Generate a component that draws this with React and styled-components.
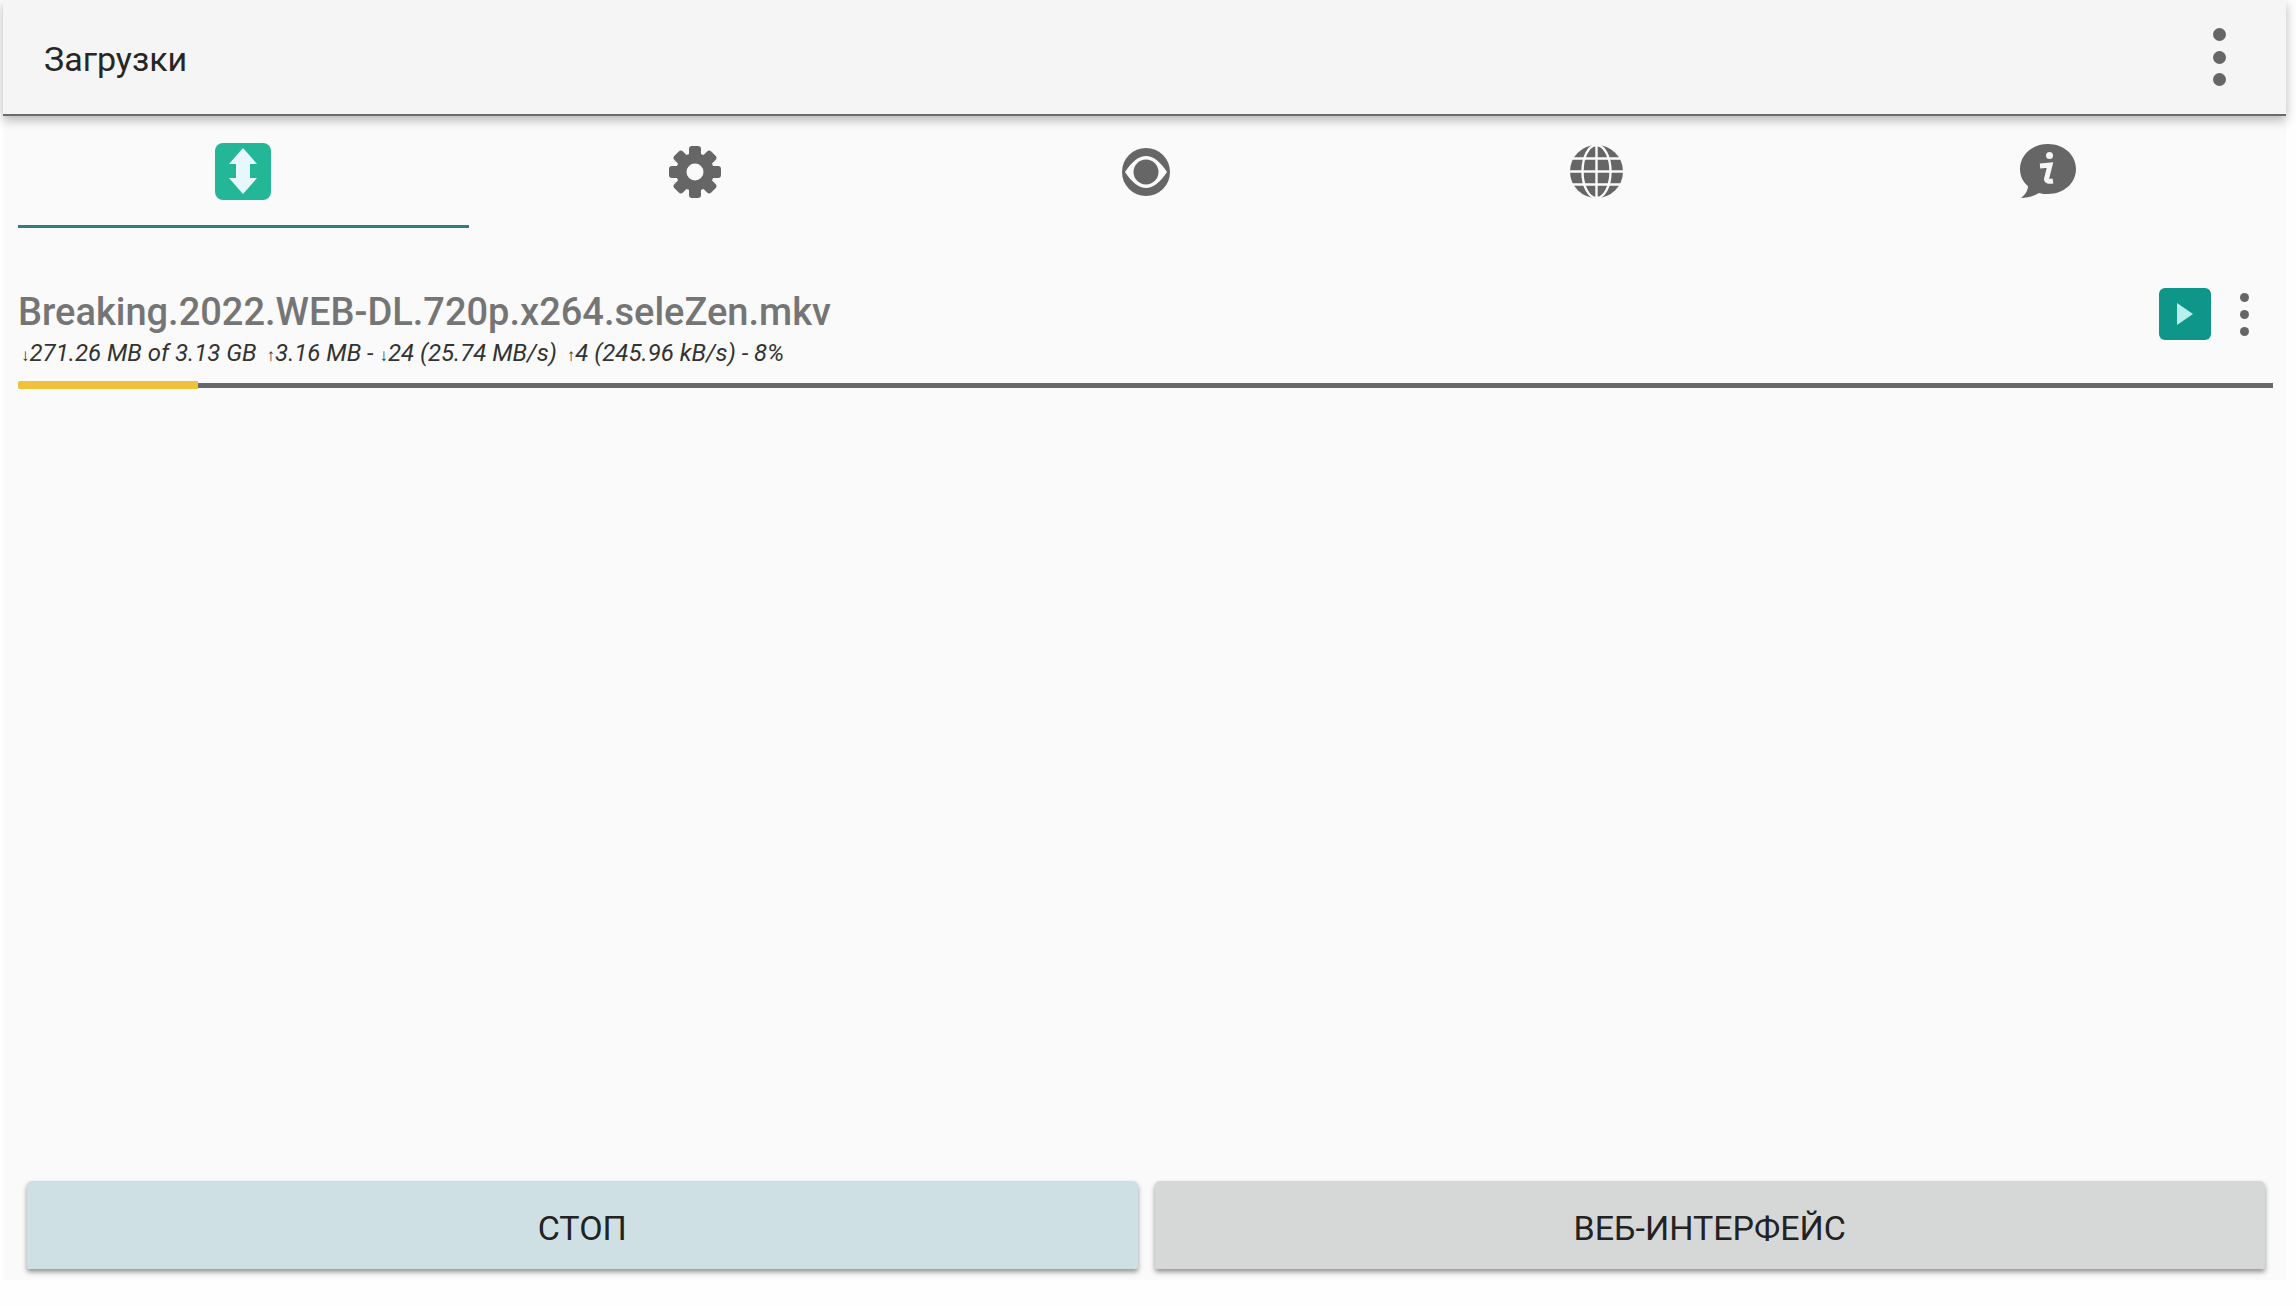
import React from 'react';
import styled, { createGlobalStyle } from 'styled-components';

const GlobalStyle = createGlobalStyle`
  html, body {
    margin: 0;
    padding: 0;
    background: #fefefe;
    font-family: Roboto, "Liberation Sans", sans-serif;
  }
`;

const Shell = styled.div`
  width: 2296px;
  height: 1306px;
  padding-left: 3px;
  box-sizing: border-box;
  overflow: hidden;
`;

const Frame = styled.div`
  width: 2283px;
  height: 1280px;
  display: flex;
  flex-direction: column;
  background: #fafafa;
`;

const Toolbar = styled.header`
  position: relative;
  z-index: 1;
  height: 116px;
  box-sizing: border-box;
  display: flex;
  align-items: center;
  justify-content: space-between;
  padding: 0 60px 0 41px;
  background: #f5f5f5;
  border-bottom: 2px solid #6b6b6b;
  box-shadow: 0 4px 10px rgba(0, 0, 0, 0.28);
`;

const Title = styled.h1`
  margin: 3px 0 0;
  font-size: 34px;
  font-weight: 400;
  color: #262626;
`;

const Kebab = styled.div`
  display: flex;
  flex-direction: column;
  gap: ${(p) => p.$gap}px;
`;

const Dot = styled.span`
  display: block;
  width: ${(p) => p.$size}px;
  height: ${(p) => p.$size}px;
  border-radius: 50%;
  background: #666;
`;

const Tabs = styled.nav`
  display: grid;
  grid-template-columns: repeat(5, 451px);
  padding-left: 15px;
`;

const Tab = styled.div`
  height: 112px;
  box-sizing: border-box;
  padding-top: 2px;
  padding-right: ${(p) => (p.$active ? '2px' : '0')};
  display: flex;
  align-items: center;
  justify-content: center;
  border-bottom: 3px solid ${(p) => (p.$active ? '#2f7d80' : 'transparent')};
`;

const Item = styled.section`
  padding: 60px 13px 0 15px;
`;

const ItemRow = styled.div`
  display: flex;
  justify-content: space-between;
  align-items: flex-start;
`;

const ItemText = styled.div`
  display: flex;
  flex-direction: column;
`;

const FileName = styled.div`
  font-size: 38px;
  line-height: 48px;
  font-weight: 500;
  color: #757575;
`;

const Stats = styled.div`
  display: flex;
  gap: 10px;
  margin-top: 2px;
  font-size: 24px;
  line-height: 30px;
  font-style: italic;
  color: #333;
  padding-left: 3px;
`;

const Arrow = styled.span`
  font-size: 17px;
`;

const Actions = styled.div`
  display: flex;
  align-items: center;
  gap: 29px;
  padding-right: 24px;
`;

const PlayButton = styled.button`
  width: 52px;
  height: 52px;
  padding: 0;
  border: none;
  border-radius: 6px;
  display: flex;
  align-items: center;
  justify-content: center;
  background: #0e9688;
`;

const Progress = styled.div`
  height: 8px;
  margin-top: 11px;
  display: flex;
  align-items: center;
`;

const ProgressFill = styled.div`
  height: 8px;
  border-radius: 2px 0 0 2px;
  background: #efc23d;
`;

const ProgressRest = styled.div`
  flex: 1;
  height: 5px;
  background: #686868;
`;

const Footer = styled.footer`
  margin-top: auto;
  display: grid;
  grid-template-columns: 1fr 1fr;
  gap: 17px;
  padding: 0 21px 11px 24px;
`;

const ActionButton = styled.button`
  height: 88px;
  padding: 6px 0 0;
  border: none;
  border-radius: 5px 5px 2px 2px;
  font-family: inherit;
  font-size: 34px;
  color: #222;
  background: ${(p) => p.$bg};
  box-shadow: 0 3px 5px rgba(0, 0, 0, 0.42);
`;

const TransferIcon = () => (
  <svg width="56" height="57" viewBox="0 0 56 57">
    <rect width="56" height="57" rx="8" fill="#24b797" />
    <path d="M28 5 L42 21 H35 V35 H42 L28 51 L14 35 H21 V21 H14 Z" fill="#e6f8fb" />
  </svg>
);

const GearIcon = () => (
  <svg width="52" height="52" viewBox="0 0 52 52">
    {[0, 45, 90, 135, 180, 225, 270, 315].map((a) => (
      <rect key={a} x="20" y="0" width="12" height="14" rx="3" fill="#666" transform={`rotate(${a} 26 26)`} />
    ))}
    <circle cx="26" cy="26" r="19" fill="#666" />
    <circle cx="26" cy="26" r="8.5" fill="#fafafa" />
  </svg>
);

const EyeIcon = () => (
  <svg width="48" height="48" viewBox="0 0 48 48">
    <circle cx="24" cy="24" r="24" fill="#666" />
    <path d="M3 24 Q24 -8 45 24 Q24 56 3 24 Z" fill="#fafafa" />
    <circle cx="24" cy="24" r="12.5" fill="#666" />
  </svg>
);

const GlobeIcon = () => (
  <svg width="53" height="53" viewBox="0 0 53 53">
    <circle cx="26.5" cy="26.5" r="26.5" fill="#666" />
    <g fill="none" stroke="#fafafa" strokeWidth="2.4">
      <ellipse cx="26.5" cy="26.5" rx="14" ry="26.5" />
      <path d="M26.5 0 V53 M0 26.5 H53 M3 13.5 H50 M3 39.5 H50" />
    </g>
  </svg>
);

const InfoIcon = () => (
  <svg width="56" height="55" viewBox="0 0 56 55">
    <path d="M28 0 C44 0 56 11 56 25 C56 39 44 50 28 50 C25 50 22 50 19 49 C14 52 8 54 1 54 C6 50 8 46 8 42 C3 38 0 32 0 25 C0 11 12 0 28 0 Z" fill="#666" />
    <circle cx="29.5" cy="11.5" r="3.5" fill="#f5f5f5" />
    <path d="M20 22 L30 21 L26.5 35 Q26.5 38 33 37" fill="none" stroke="#f5f5f5" strokeWidth="5" />
  </svg>
);

const PlayIcon = () => (
  <svg width="16" height="22" viewBox="0 0 16 22">
    <path d="M0 0 L16 11 L0 22 Z" fill="#b8f0ec" />
  </svg>
);

const tabs = [
  { id: 'transfers', icon: <TransferIcon />, active: true },
  { id: 'settings', icon: <GearIcon /> },
  { id: 'watch', icon: <EyeIcon /> },
  { id: 'network', icon: <GlobeIcon /> },
  { id: 'about', icon: <InfoIcon /> },
];

const Dots = ({ size, gap }) => (
  <Kebab $gap={gap}>
    <Dot $size={size} />
    <Dot $size={size} />
    <Dot $size={size} />
  </Kebab>
);

const App = () => (
  <Shell>
    <GlobalStyle />
    <Frame>
      <Toolbar>
        <Title>Загрузки</Title>
        <Dots size={13} gap={9.5} />
      </Toolbar>
      <Tabs>
        {tabs.map((t) => (
          <Tab key={t.id} $active={t.active}>
            {t.icon}
          </Tab>
        ))}
      </Tabs>
      <Item>
        <ItemRow>
          <ItemText>
            <FileName>Breaking.2022.WEB-DL.720p.x264.seleZen.mkv</FileName>
            <Stats>
              <span><Arrow>↓</Arrow>271.26 MB of 3.13 GB</span>
              <span><Arrow>↑</Arrow>3.16 MB - <Arrow>↓</Arrow>24 (25.74 MB/s)</span>
              <span><Arrow>↑</Arrow>4 (245.96 kB/s) - 8%</span>
            </Stats>
          </ItemText>
          <Actions>
            <PlayButton>
              <PlayIcon />
            </PlayButton>
            <Dots size={9} gap={8} />
          </Actions>
        </ItemRow>
        <Progress>
          <ProgressFill style={{ width: '8%' }} />
          <ProgressRest />
        </Progress>
      </Item>
      <Footer>
        <ActionButton $bg="#cfe0e4">СТОП</ActionButton>
        <ActionButton $bg="#d6d8d8">ВЕБ-ИНТЕРФЕЙС</ActionButton>
      </Footer>
    </Frame>
  </Shell>
);

export default App;
